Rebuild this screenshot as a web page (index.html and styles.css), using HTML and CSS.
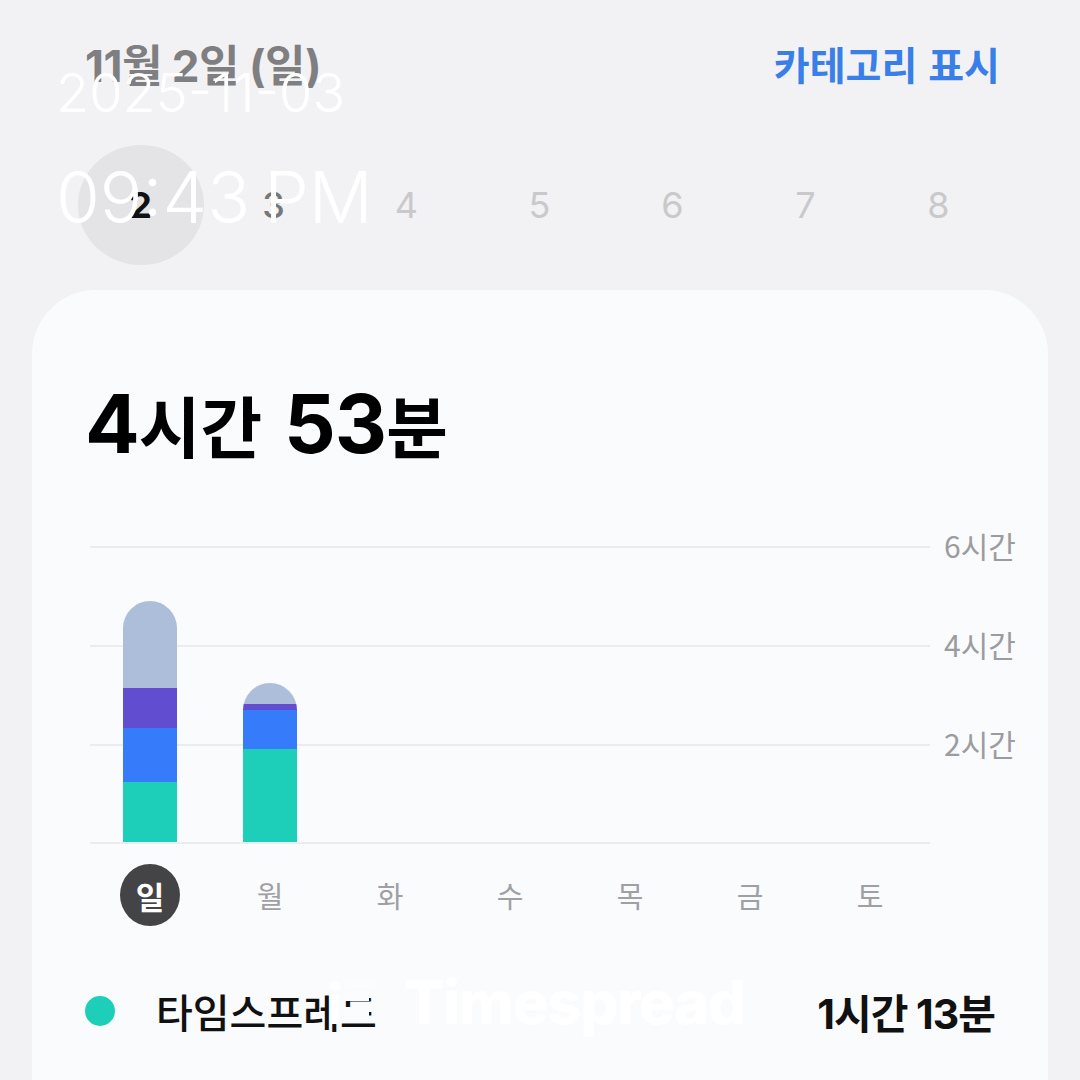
FILE: index.html
```html
<!DOCTYPE html>
<html lang="ko">
<head>
<meta charset="utf-8">
<link rel="stylesheet" href="styles.css">
</head>
<body>
<div class="screen">
  <header class="top">
    <div class="date-title">11월 2일 (일)</div>
    <div class="cat-link">카테고리 표시</div>
  </header>

  <div class="days">
    <div class="day day-sel"><span class="num">2</span></div>
    <div class="day day-next">3</div>
    <div class="day">4</div>
    <div class="day">5</div>
    <div class="day">6</div>
    <div class="day">7</div>
    <div class="day">8</div>
  </div>

  <section class="card">
    <div class="total"><span class="n">4</span><span class="u">시간</span><span class="n gap">53</span><span class="u">분</span></div>

    <div class="chart">
      <div class="plot">
        <div class="bar">
          <div class="seg s-gray" style="height:87px"></div>
          <div class="seg s-purple" style="height:40px"></div>
          <div class="seg s-blue" style="height:54px"></div>
          <div class="seg s-teal" style="height:60px"></div>
        </div>
        <div class="bar">
          <div class="seg s-gray" style="height:21px"></div>
          <div class="seg s-purple" style="height:6px"></div>
          <div class="seg s-blue" style="height:39px"></div>
          <div class="seg s-teal" style="height:93px"></div>
        </div>
        <div class="bar-empty"></div>
        <div class="bar-empty"></div>
        <div class="bar-empty"></div>
        <div class="bar-empty"></div>
        <div class="bar-empty"></div>
      </div>
      <div class="yaxis">
        <div class="ylab">6시간</div>
        <div class="ylab">4시간</div>
        <div class="ylab">2시간</div>
      </div>
    </div>

    <div class="weekdays">
      <div class="wd"><span class="wd-sel">일</span></div>
      <div class="wd">월</div>
      <div class="wd">화</div>
      <div class="wd">수</div>
      <div class="wd">목</div>
      <div class="wd">금</div>
      <div class="wd">토</div>
    </div>

    <div class="legend-row">
      <span class="dot"></span>
      <span class="app-name">타임스프레드</span>
      <span class="app-time">1시간 13분</span>
    </div>
  </section>

  <div class="stamp">
    <div class="stamp-date">2025-11-03</div>
    <div class="stamp-time">09:43 PM</div>
  </div>

  <div class="watermark">
    <svg class="wm-icon" width="62" height="50" viewBox="0 0 62 50"><circle cx="5" cy="9" r="5" fill="#fff"/><rect x="15" y="2" width="32" height="9" fill="#fbfcfe"/><rect x="15" y="14" width="24" height="10" fill="#fbfcfe"/><rect x="15" y="30" width="24" height="10" fill="#fbfcfe"/><rect x="1" y="17" width="8" height="30" fill="#fff"/></svg>
    <span>Timespread</span>
  </div>
</div>
</body>
</html>
```

FILE: styles.css
```css
* { box-sizing: border-box; }
html, body { margin: 0; padding: 0; }
body {
  width: 1080px;
  height: 1080px;
  overflow: hidden;
  background: #f2f2f4;
  font-family: "Inter", "Noto Sans CJK KR", sans-serif;
}
.screen {
  position: relative;
  width: 1080px;
  height: 1080px;
}
.top {
  display: flex;
  justify-content: space-between;
  align-items: center;
  padding: 38px 80px 0 85px;
  height: 88px;
}
.date-title {
  font-family: "Inter", "Noto Sans CJK KR", sans-serif;
  font-size: 44px;
  font-weight: 700;
  color: #7f7f82;
  letter-spacing: -0.5px;
}
.cat-link {
  font-family: "Noto Sans CJK KR", sans-serif;
  font-size: 39px;
  font-weight: 700;
  color: #3a7fe8;
}
.days {
  display: grid;
  grid-template-columns: repeat(7, 133px);
  margin: 57px 0 0 74px;
  height: 120px;
  align-items: center;
  justify-items: center;
}
.day {
  font-size: 36px;
  color: #c9c9cc;
  font-weight: 400;
}
.day-sel {
  width: 126px;
  height: 120px;
  border-radius: 50%;
  background: #e4e4e7;
  display: flex;
  align-items: center;
  justify-content: center;
  color: #111;
  font-weight: 700;
}
.day-next { color: #77777a; font-weight: 500; }

.card {
  margin: 25px 32px 0 32px;
  background: #fafbfd;
  border-radius: 64px 64px 0 0;
  height: 820px;
  padding: 84px 0 0 53px;
}
.total {
  line-height: 100px;
  height: 100px;
  color: #000;
  font-weight: 800;
  white-space: nowrap;
}
.total .n {
  font-family: "Inter", sans-serif;
  font-size: 81px;
  font-weight: 700;
  letter-spacing: -1px;
}
.total .gap { margin-left: 22px; }
.total .u {
  font-family: "Noto Sans CJK KR", sans-serif;
  font-size: 67px;
  font-weight: 700;
}
.chart {
  display: flex;
  margin: 72px 0 0 5px;
}
.plot {
  width: 840px;
  height: 298px;
  display: grid;
  grid-template-columns: repeat(7, 120px);
  align-items: end;
  background:
    linear-gradient(#ececef, #ececef) 0 0 / 100% 2px no-repeat,
    linear-gradient(#ececef, #ececef) 0 99px / 100% 2px no-repeat,
    linear-gradient(#ececef, #ececef) 0 198px / 100% 2px no-repeat,
    linear-gradient(#ececef, #ececef) 0 296px / 100% 2px no-repeat;
}
.bar {
  justify-self: center;
  width: 54px;
  display: flex;
  flex-direction: column;
  border-radius: 27px 27px 0 0;
  overflow: hidden;
  margin-bottom: 2px;
}
.seg { width: 100%; }
.s-gray { background: #adbedb; }
.s-purple { background: #614dd0; }
.s-blue { background: #367bfa; }
.s-teal { background: #1dcfb9; }

.yaxis {
  display: flex;
  flex-direction: column;
  margin-top: -21px;
  padding-left: 14px;
}
.ylab {
  height: 99px;
  line-height: 40px;
  font-family: "Noto Sans CJK KR", sans-serif;
  font-size: 30px;
  color: #9c9ca0;
}
.weekdays {
  display: grid;
  grid-template-columns: repeat(7, 120px);
  margin: 20px 0 0 5px;
  height: 62px;
  align-items: center;
  justify-items: center;
}
.wd {
  font-family: "Noto Sans CJK KR", sans-serif;
  font-size: 29px;
  color: #a0a0a4;
}
.wd-sel {
  display: flex;
  width: 60px;
  height: 62px;
  border-radius: 50%;
  background: #444446;
  color: #fff;
  align-items: center;
  justify-content: center;
  font-weight: 700;
  font-size: 31px;
}
.legend-row {
  display: flex;
  align-items: center;
  margin: 60px 53px 0 0;
  height: 50px;
}
.dot {
  width: 30px;
  height: 30px;
  border-radius: 50%;
  background: #1dcfb9;
  margin-right: 41px;
}
.app-name {
  font-family: "Noto Sans CJK KR", sans-serif;
  font-size: 40px;
  font-weight: 500;
  color: #111;
  flex: 1;
}
.app-time {
  font-family: "Inter", "Noto Sans CJK KR", sans-serif;
  font-size: 41px;
  font-weight: 700;
  color: #111;
  letter-spacing: -1px;
}

.stamp {
  position: absolute;
  left: 56px;
  top: 62px;
  color: #fff;
  font-family: "Inter", sans-serif;
  font-weight: 300;
}
.stamp-date {
  font-size: 54px;
  line-height: 62px;
}
.stamp-time {
  font-size: 71px;
  line-height: 90px;
  margin-top: 28px;
  word-spacing: -6px;
}
.watermark {
  position: absolute;
  left: 330px;
  top: 966px;
  display: flex;
  align-items: center;
  gap: 12px;
  color: #fff;
  font-family: "Inter", sans-serif;
  font-weight: 800;
  font-size: 60px;
  letter-spacing: -1.5px;
}
```
